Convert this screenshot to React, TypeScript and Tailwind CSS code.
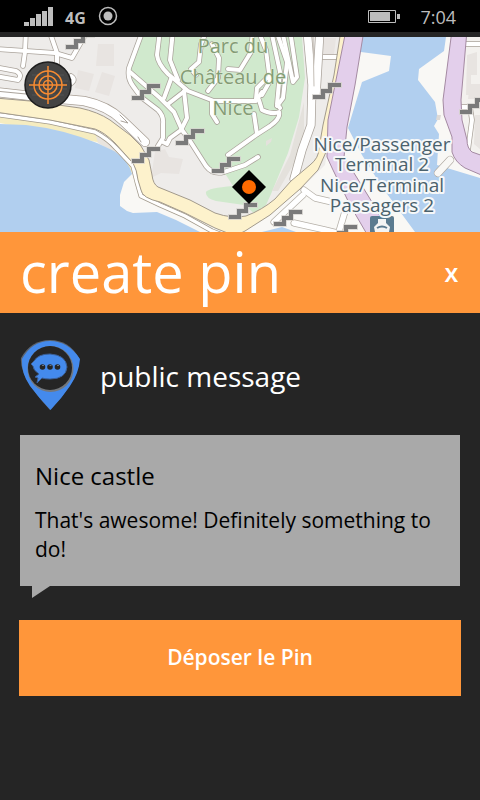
import React from "react";

const stairs = [
  [80, 41],
  [146, 92],
  [190, 137],
  [146, 155],
  [226, 165],
  [243, 211],
  [288, 218],
  [327, 91],
  [474, 106],
  [343, 233],
];

const streets = [
  "M-5 49L26 51L55 53L72 58L84 37",
  "M26 30L25 52L23 66",
  "M49 30L57 53V64",
  "M-5 67L16 71Q23 75 18 80L-5 76",
  "M70 84Q77 80 71 76",
  "M143 30L129 68Q127 78 133 86L141 97L158 110Q164 116 163 124L163 138L158 146",
  "M130 72L160 98L174 112L182 130L190 141L206 166Q213 175 224 172L245 165L258 157",
  "M160 30L157 55Q158 64 168 74L188 91L214 101H256L262 92",
  "M173 30L170 60L178 80",
  "M184 91L187 118L181 130L170 138L167 144L163 142",
  "M186 90L168 104",
  "M171 79L164 98",
  "M207 30L201 44L199 62L191 69L196 75",
  "M212 44L219 58L218 78L208 91",
  "M253 30L251 52L240 70L228 69",
  "M212 101L212 114L217 122",
  "M259 100L262 110Q272 115 279 112Q281 118 270 126L256 135L228 155",
  "M254 114L257 134",
  "M262 95L270 81L266 50L258 30",
  "M271 30L280 72L277 104L280 108",
  "M276 30L287 62L283 98L277 106",
  "M282 30L293 82L297 77L290 30",
  "M256 99L257 88L267 78",
  "M465 44H485",
  "M459 107H470L472 120L468 150",
  "M323 57H340",
];

const rightStreets = [
  "M304 190L315 198L332 202",
  "M274 222L303 195",
  "M346 208L338 235",
  "M294 223L325 230L350 236",
];

const seaQuay = "M0 115L50 122L95 132Q108 139 116 148L133 166L137 182L141 196L160 205L185 216L212 231L225 236";
const boulevard =
  "M-5 98L30 101L80 108Q98 112 110 120L130 135L141 146L149 160L152 175Q153 184 158 187L190 200L215 213Q232 219 246 216Q262 210 275 199L291 181L310 165Q319 158 319 148L323 125L334 75L341 30H347L331 115L326 152L318 170L300 189L270 215L245 231L235 236L215 228L185 213L160 202Q142 198 141 190L138 180Q137 170 133 163L115 143Q104 132 95 129L50 120L-5 112z";

function StatusBar() {
  return (
    <header className="flex h-8 items-center justify-between bg-black px-6 text-[#bdbdbd]">
      <div className="flex items-center gap-3">
        <svg className="h-[19px] w-[29px]" viewBox="0 0 29 19" fill="currentColor" role="img" aria-label="Signal strength">
          <path d="M0 15h5v4H0zM6 11h5v8H6zM12 7h5v12h-5zM18 4h5v15h-5zM24 0h5v19h-5z" />
        </svg>
        <span className="pt-1 text-base font-bold leading-5">4G</span>
        <svg className="h-5 w-5" viewBox="0 0 20 20" role="img" aria-label="Location in use">
          <circle cx="10" cy="10" r="8.5" fill="none" stroke="currentColor" strokeWidth="1.500" />
          <circle cx="10" cy="10" r="4.500" fill="currentColor" />
        </svg>
      </div>
      <div className="flex items-center gap-5 pt-px">
        <svg className="h-[13px] w-8" viewBox="0 0 32 13" role="img" aria-label="Battery">
          <path d="M.5 .5h27v12H.5z" fill="none" stroke="currentColor" />
          <path d="M2 2h20v9H2zM29 4h3v5h-3z" fill="currentColor" />
        </svg>
        <time className="text-lg leading-6">7:04</time>
      </div>
    </header>
  );
}

function MapView() {
  return (
    <section className="relative h-[195px] overflow-hidden bg-[#edebea]" aria-label="Map">
      <svg className="h-full w-full" viewBox="0 37 480 195" preserveAspectRatio="xMidYMid slice">
        <path d="M0 30H480V240H0z" fill="#eeecea" />
        <path d="M98 44h16v22H96zM78 70l16 4-5 17-14-3zM102 72l13 4-6 20-14-4zM155 152l10-3 4 8 14 2-4 15-18-1-10 5zM324 38h12l-2 16-11 2z" fill="#e8e4e1" />

        {/* sea, breakwater and harbour */}
        <path d="M0 112L60 120L98 130L125 155L138 190L160 202L225 232H0z" fill="#f9f8f5" />
        <path d="M0 114L60 122L100 133L134 164L132 173L118 153L97 142L0 123z" fill="#f5ecc0" />
        <path d="M96 136L108 139L122 152L128 167L120 156L98 143z" fill="#e9e4de" />
        <path d="M0 124L26 125Q62 129 97 143L114 151Q129 161 132 174L124 182L120 195V206L127 211L133 213L157 212L176 220L200 232H0z" fill="#b1cfef" />
        <path d="M345 37H480V232H235L300 190L325 165z" fill="#f9f8f5" />
        <path d="M262 232L282 227L296 232z" fill="#b1cfef" />
        <path d="M361 37H446L444 51L419 69L418 80L435 102L438 119L434 126L439 134L437 165L480 178V232H415L382 187L362 155L348 128L362 82L389 71L391 56L361 52z" fill="#b1cfef" />
        <path d="M437 115h4l-1 5h-4z" fill="#dedad6" />
        <path d="M463 37H480V158L468 146L461 105z" fill="#f3f1ee" />
        <path d="M467 55l10-3v23h-6v20h-5zM470 84h10v15h-12zM475 115h5v34l-6-5z" fill="#e8e4e1" />

        {/* park */}
        <path d="M142 37H302L305 78L299 117L288 153L271 194L266 205L255 214L244 205L216 201Q205 198 206 192Q208 188 233 186L226 175L209 170L190 143L180 132L163 140L162 114L141 99L127 75z" fill="#d0e9cd" />
        <path d="M304 102L290 155L272 191L278 191L296 160L304 142z" fill="#e4e1dc" />
        <path d="M266 141l6-3-1 4-5 4z" fill="#e4e1dc" />

        <g fill="none" strokeLinejoin="round" strokeLinecap="round">
          <g stroke="#aaa39b" strokeWidth="5.500">
            {streets.map((d) => (
              <path key={d} d={d} />
            ))}
          </g>
          <g stroke="#fff" strokeWidth="4">
            {streets.map((d) => (
              <path key={d} d={d} />
            ))}
          </g>
          <g stroke="#b5b0a8" strokeWidth="7">
            {rightStreets.map((d) => (
              <path key={d} d={d} />
            ))}
          </g>
          <g stroke="#fff" strokeWidth="5.500">
            {rightStreets.map((d) => (
              <path key={d} d={d} />
            ))}
          </g>

          {/* avenues beside the park */}
          <path d="M307 30L312 85L311 125L302 150L294 179M320 30L316 95" stroke="#aaa39b" strokeWidth="9" />
          <path d="M307 30L312 85L311 125L302 150L294 179M320 30L316 95" stroke="#fff" strokeWidth="7.500" />
          <path d="M313 34L314 86" stroke="#c4beb6" />
          <path d="M-5 92L40 97L84 101Q108 106 122 120L145 142" stroke="#a89f95" strokeWidth="10" />
          <path d="M-5 92L40 97L84 101Q108 106 122 120L145 142" stroke="#fff" strokeWidth="8.500" />
          <path d="M120 115L128 123L121 121M-5 91L26 94M138 137L141 142" stroke="#aaa39b" />

          {/* seafront boulevard */}
          <path d={seaQuay} stroke="#a29a8c" strokeWidth="5" />
          <path d={seaQuay} stroke="#fff" strokeWidth="3.500" />
          <path d={boulevard} stroke="#a29a8c" fill="#fdf2cc" />

          {/* harbour quays */}
          <path
            d="M346 30L328 120L327 157L333 170L350 205L368 236H391L372 202L354 173L344 157L347 127L355 85L364 30z"
            fill="#e3cfeb"
            stroke="#a48aa2"
          />
          <path
            d="M452 30L443 100L444 115L452 137V152Q455 162 465 168L486 177V157L472 152Q467 148 467 140L462 120L461 100L467 30z"
            fill="#e3cfeb"
            stroke="#a48aa2"
          />
          <path d="M438 173L450 160" stroke="#aaa39b" strokeWidth="8" />
          <path d="M438 173L450 160" stroke="#f9f8f5" strokeWidth="7" />
        </g>

        <g fill="none">
          {stairs.map(([x, y]) => (
            <g key={`${x}-${y}`} transform={`translate(${x} ${y})`}>
              <path d="M-15 6H-4V0H3V-6H15" stroke="#d5d2ce" strokeWidth="5.500" />
              <path d="M-14 6H-4V0H3V-6H14" stroke="#7a7a7a" strokeWidth="4" />
            </g>
          ))}
        </g>

        <g transform="translate(370 216)">
          <path d="M0 2Q0 0 2 0H22Q24 0 24 2V18H0z" fill="#5b7b90" />
          <path d="M8 3h8v4l4 4-1 5H5l-1-5 4-4z" fill="#f3f4f4" />
          <path d="M7 12Q12 9 17 12" fill="none" stroke="#5b7b90" strokeWidth="2" />
        </g>

        <g textAnchor="middle" strokeLinejoin="round" paintOrder="stroke">
          <g className="text-xl" fill="#849c75" stroke="#e3eedb" strokeWidth="1">
            <text x="233" y="53">Parc du</text>
            <text x="233" y="84">Château de</text>
            <text x="233" y="115">Nice</text>
          </g>
          <g className="text-[19px]" fill="#4b626d" stroke="#f6f8f9" strokeWidth="4">
            <text x="382" y="151">Nice/Passenger</text>
            <text x="382" y="171">Terminal 2</text>
            <text x="382" y="192">Nice/Terminal</text>
            <text x="382" y="212">Passagers 2</text>
          </g>
        </g>

        <path d="M249 170L266 187L249 204L232 187z" fill="#000" />
        <circle cx="249" cy="187" r="7" fill="#ff6a00" />
      </svg>

      <button type="button" aria-label="Center on my position" className="absolute left-6 top-6 h-12 w-12">
        <svg viewBox="0 0 48 48" fill="none">
          <circle cx="24" cy="24" r="23" fill="#444" stroke="#1d1d1d" strokeWidth="1.500" />
          <path d="M8 14h32M4 20h40M5 28h38M8 34h32" stroke="#525252" />
          <g stroke="#f68b32" strokeWidth="1.500">
            <circle cx="24" cy="24" r="14" />
            <circle cx="24" cy="24" r="9" />
            <circle cx="24" cy="24" r="4.500" />
            <path d="M24 5v38M5 24h38" />
          </g>
        </svg>
      </button>
    </section>
  );
}

function PinIcon() {
  return (
    <svg className="h-[72px] w-[60px] shrink-0" viewBox="0 0 60 72" aria-hidden="true">
      <path d="M1 19Q11 1 30 1Q49 1 59 19Q61 38 30 71Q-1 38 1 19z" fill="#5c6470" />
      <path d="M2 20Q12 2 30 2Q48 2 60 20Q59 34 50 47Q42 59 30.500 71Q19 59 10 47Q1 34 2 20z" fill="#448aec" />
      <circle cx="30.500" cy="30" r="23" fill="#73777c" />
      <circle cx="30" cy="29" r="22" fill="#252525" />
      <path d="M15 38L19 35Q13 31 13 27L11 25L14 22Q18 15 30 15Q46 16 47 28Q46 40 30 40Q25 40 22 39L17 44L18 39z" fill="#448aec" stroke="#3b5f96" strokeWidth="1" />
      <g fill="#252525">
        <circle cx="22.500" cy="28" r="2.800" />
        <circle cx="30" cy="28" r="2.800" />
        <circle cx="37.500" cy="28" r="2.800" />
      </g>
      <path d="M22 26.500h2M29.500 26.500h2M37 26.500h2" stroke="#6d7480" />
    </svg>
  );
}

export default function App() {
  return (
    <div className="flex min-h-screen flex-col bg-[#252525] font-['Open_Sans','Noto_Sans',sans-serif]">
      <StatusBar />
      <div className="h-[5px]" />
      <MapView />
      <main>
        <div className="flex h-[81px] items-center justify-between bg-[#ff963a] px-5 pb-1 text-white">
          <h1 className="text-[56px] leading-[76px]">create pin</h1>
          <button type="button" aria-label="Close" className="px-[2px] pt-2 text-xl font-bold leading-8">
            X
          </button>
        </div>
        <div className="flex flex-col px-5 pt-[26px]">
          <div className="flex items-center gap-5 text-white">
            <PinIcon />
            <h2 className="pt-[2px] text-[28px] leading-9">public message</h2>
          </div>
          <div className="relative mt-6 bg-[#a9a9a9] px-[15px] pb-[22px] pt-[23px] text-black">
            <h3 className="text-2xl leading-9">Nice castle</h3>
            <p className="mt-3 text-[21px] leading-[29px]">That's awesome! Definitely something to do!</p>
            <svg className="absolute left-3 top-full h-3 w-[18px]" viewBox="0 0 18 12" aria-hidden="true">
              <path d="M0 0H18L0 12z" fill="#a9a9a9" />
            </svg>
          </div>
          <button type="button" className="-mx-px mt-[34px] h-[76px] bg-[#ff963a] text-[21px] font-semibold text-white">
            Déposer le Pin
          </button>
        </div>
      </main>
    </div>
  );
}
